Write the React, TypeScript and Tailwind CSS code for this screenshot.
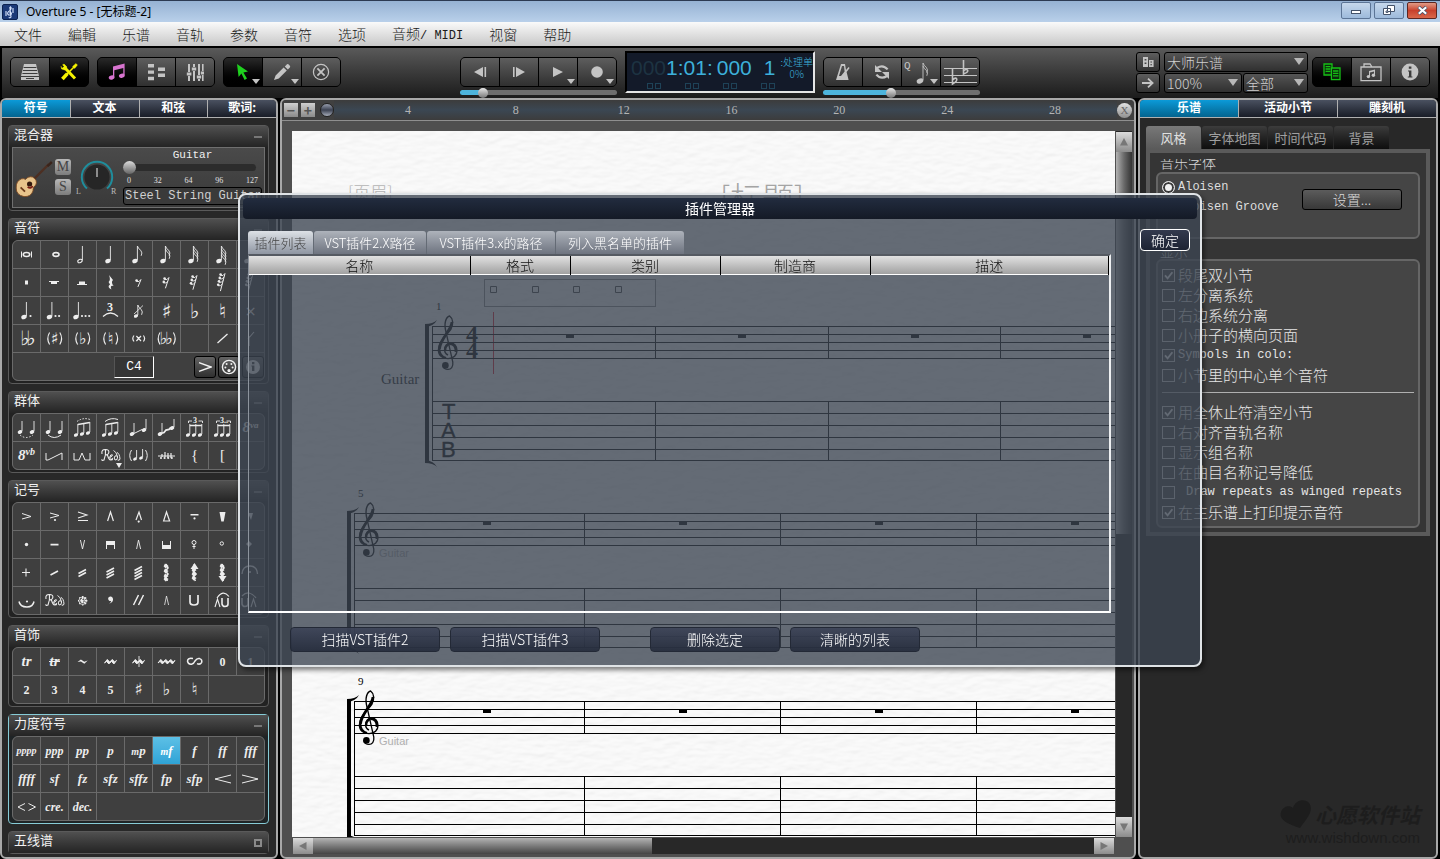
import React from "react";

const MONO = "[font-family:'Liberation_Mono',monospace]";
const SERIF = "[font-family:'Liberation_Serif',serif]";
const MUSIC = "[font-family:'DejaVu_Sans',sans-serif]";

/* ---------- small drawing helpers ---------- */

function Svg({ w = 27, h = 27, children }: { w?: number; h?: number; children: React.ReactNode }) {
  return (
    <svg width={w} height={h} viewBox={`0 0 ${w} ${h}`} fill="currentColor" stroke="none" aria-hidden="true">
      {children}
    </svg>
  );
}

function Line({ d, w = 1 }: { d: string; w?: number }) {
  return <path d={d} fill="none" stroke="currentColor" strokeWidth={w} />;
}

function Head({ x, y, hollow = false, r = 2.8 }: { x: number; y: number; hollow?: boolean; r?: number }) {
  return (
    <ellipse
      cx={x}
      cy={y}
      rx={hollow ? r - 0.5 : r}
      ry={hollow ? r * 0.55 : r * 0.75}
      transform={`rotate(-24 ${x} ${y})`}
      fill={hollow ? "none" : "currentColor"}
      stroke={hollow ? "currentColor" : "none"}
      strokeWidth={hollow ? 1.1 : 0}
    />
  );
}

function Note({ x, y = 20, h = 15, hollow = false, flags = 0, r = 2.8 }: { x: number; y?: number; h?: number; hollow?: boolean; flags?: number; r?: number }) {
  const sx = x + r - 0.4;
  return (
    <g>
      <Head x={x} y={y} hollow={hollow} r={r} />
      <Line d={`M${sx} ${y - 1} V${y - h}`} w={0.9} />
      {Array.from({ length: flags }, (_, i) => (
        <Line key={i} d={`M${sx} ${y - h + i * 3} q1 3 3.4 4.4 q2 2.4 .4 5.4`} w={0.9} />
      ))}
    </g>
  );
}

const dots = (n: number, x: number, y: number, step = 3.6) =>
  Array.from({ length: n }, (_, i) => <circle key={i} cx={x + i * step} cy={y} r="1.1" />);

function RestFlags({ n }: { n: number }) {
  const top = 13.5 - n * 2;
  return (
    <Svg>
      {Array.from({ length: n }, (_, i) => (
        <g key={i}>
          <circle cx={11.6 - i * 0.8} cy={top + i * 3.4} r="1.3" />
          <Line d={`M${11.4 - i * 0.8} ${top + i * 3.4 + 1} q3 1 ${4.4} -2`} w={0.9} />
        </g>
      ))}
      <Line d={`M16 ${top - 1} L${13.4 - n * 0.5} ${top + n * 3.4 + 3}`} w={1} />
    </Svg>
  );
}

const t = (s: string, cls: string) => <span className={cls}>{s}</span>;
const acc = (s: string) => t(s, `${MUSIC} text-[20px] leading-none`);
const accS = (s: string) => t(s, `${MUSIC} text-[14px] leading-none`);
const dyn = (s: string) => t(s, `${SERIF} text-[13px] leading-none font-bold italic`);
const dynS = (s: string) => t(s, `${SERIF} text-[10px] leading-none font-bold italic`);
const num = (s: string) => t(s, `${SERIF} text-[12px] leading-none font-bold`);

/* an accidental between tall, thin parentheses */
function Paren({ sign }: { sign: string }) {
  return (
    <Svg>
      <Line d="M8.6 7.5 Q5 13.5 8.6 19.5 M18.8 7.5 Q22.4 13.5 18.8 19.5" w={1.1} />
      <text x="13.7" y="19" fontSize="16" textAnchor="middle" fontFamily="DejaVu Sans">{sign}</text>
    </Svg>
  );
}

const Beam = ({ arc }: { arc: "dash" | "solid" | "3" | "3.." }) => (
  <Svg>
    {[7, 13, 19].map((x, i) => {
      const slope = arc === "dash" || arc === "solid" ? i : 0;
      return <Note key={x} x={x} y={21 - slope} h={11} r={2.2} />;
    })}
    {arc === "dash" || arc === "solid" ? (
      <>
        <Line d="M8.8 10.5 L20.8 8.5" w={1.4} />
        <path d="M8 7.5 Q14 3 21 5.5" fill="none" stroke="currentColor" strokeDasharray={arc === "dash" ? "1.5 1.5" : "none"} />
      </>
    ) : (
      <>
        <Line d="M8.8 11.5 H20.8" w={1.4} />
        <Line d="M7.5 9 V7 H11 M17.5 7 H21.5 V9" w={0.9} />
        <text x={arc === "3" ? 12 : 11} y="8.5" fontSize="8" fontWeight="bold" fontFamily="Liberation Serif">
          {arc}
        </text>
      </>
    )}
  </Svg>
);

const Tie = ({ dash }: { dash?: boolean }) => (
  <Svg>
    <Note x={7} y={18} h={11} r={2.4} />
    <Note x={19} y={18} h={11} r={2.4} />
    <path d="M7 21 Q13 26 20 21" fill="none" stroke="currentColor" strokeDasharray={dash ? "1.5 1.8" : "none"} />
  </Svg>
);

const Ped = ({ menu }: { menu?: boolean }) => (
  <Svg>
    <Line d="M5 12 Q4 7 9 7.5 Q13 8 11.5 11.5 Q10 13.5 8 12.5 M8.5 8 Q9 13 7 18 Q5 19 4.6 17.4 M10.4 13 Q12 18 13.5 18 Q15 18 15.6 16" w={1.1} />
    <Line d="M12.6 15.5 Q16 14 15.4 12.8 Q13.5 12 12.8 15 Q13 18.6 16 17.6 M20.6 15 Q20 13 18 14 Q16.4 16 18 18 Q20.6 18.4 20.6 15 Q19.5 10 16.6 8.4 M20.6 18 Q22.5 19 23 17 Q22.6 11.5 20 10.5" w={1} />
    {menu && <path d="M19 21 h6 l-3 5z" />}
  </Svg>
);

const Strokes = ({ n }: { n: number }) => (
  <Svg>
    {Array.from({ length: n }, (_, i) => (
      <Line key={i} d={`M9.5 ${16 + i * 3 - (n - 1) * 1.5} L17 ${12 + i * 3 - (n - 1) * 1.5}`} w={1.7} />
    ))}
  </Svg>
);

const Wave = ({ up, down }: { up?: boolean; down?: boolean }) => (
  <Svg>
    {(up ? [11, 15, 19] : down ? [7, 11, 15] : [7, 12, 17, 20]).map((y) => (
      <path key={y} d={`M12 ${y - 2.4} l3.6 2.4 l-3 2.6 l-2 -2.4z`} />
    ))}
    <Line d="M13 5 L15 9 L12.4 12 L15 15 L12.4 18 L14.4 22" w={1.6} />
    {up && <path d="M9.5 10 L13.5 4 L17.5 10z" />}
    {down && <path d="M9.5 17 L13.5 23 L17.5 17z" />}
  </Svg>
);

const Mordent = ({ n, cut }: { n: number; cut?: boolean }) => {
  const x0 = 13.5 - n * 2.5;
  return (
    <Svg>
      {Array.from({ length: n }, (_, i) => (
        <path key={i} d={`M${x0 + i * 5 - 1} 15 l2.8 -3.6 l2.4 2.6 l1.8 -1.6 l-2.6 3.6 l-2.4 -2.6z`} stroke="currentColor" strokeWidth="0.9" />
      ))}
      {cut && <Line d="M14 8 V19" w={0.9} />}
    </Svg>
  );
};

/* ---------- symbol palettes ---------- */

const notes: React.ReactNode[] = [
  <Svg><Line d="M8.5 10.5 V16.5 M18.5 10.5 V16.5" w={1} /><ellipse cx="13.5" cy="13.5" rx="3.2" ry="2" fill="none" stroke="currentColor" strokeWidth="1.6" /></Svg>,
  <Svg><ellipse cx="15" cy="13.5" rx="3" ry="1.9" fill="none" stroke="currentColor" strokeWidth="1.6" /></Svg>,
  <Svg><Note x={11} hollow /></Svg>,
  <Svg><Note x={11} /></Svg>,
  <Svg><Note x={10} flags={1} /></Svg>,
  <Svg><Note x={10} flags={2} /></Svg>,
  <Svg><Note x={10} flags={3} /></Svg>,
  <Svg><Note x={10} flags={4} /></Svg>,
  <Svg><Note x={10} flags={4} /></Svg>,
  <Svg><path d="M12 11.5 h3 v4 h-3z" /></Svg>,
  <Svg><path d="M8 12 h10 v1 h-2 v2 h-6 v-2 h-2z" /></Svg>,
  <Svg><path d="M8 15 h2 v-2.5 h6 v2.5 h2 v1 h-10z" /></Svg>,
  <Svg><path d="M12 6 L16 11 Q13.6 13 16.6 17 Q12.6 16 14.4 20.4 Q9.6 18 13 15.4 L11.6 13 Q14 11 12 6z" /></Svg>,
  <RestFlags n={1} />,
  <RestFlags n={2} />,
  <RestFlags n={3} />,
  <RestFlags n={4} />,
  <RestFlags n={4} />,
  <Svg><Note x={11} />{dots(1, 17.5, 19)}</Svg>,
  <Svg><Note x={8.5} />{dots(2, 14.5, 19)}</Svg>,
  <Svg><Note x={7} />{dots(3, 13, 19)}</Svg>,
  <Svg><text x="10" y="13.5" fontSize="12" fontWeight="bold" fontFamily="Liberation Serif">3</text><Line d="M6 19.5 Q13.5 12.5 21 19.5" w={1.2} /></Svg>,
  <Svg><Note x={11} y={19} h={11} r={2.2} flags={1} /><Line d="M9 17 L18 8.5" w={0.8} /></Svg>,
  acc("♯"),
  acc("♭"),
  acc("♮"),
  accS("×"),
  <Svg><text x="7" y="20" fontSize="20" fontFamily="DejaVu Sans">♭</text><text x="13" y="20" fontSize="20" fontFamily="DejaVu Sans">♭</text></Svg>,
  <Paren sign="♯" />,
  <Paren sign="♭" />,
  <Paren sign="♮" />,
  <Svg><Line d="M9 10.5 Q6.6 13.5 9 16.5 M18.4 10.5 Q20.8 13.5 18.4 16.5 M11.4 11 L16 16 M16 11 L11.4 16" w={1.2} /></Svg>,
  <Svg><Line d="M7 7.5 Q3.4 13.5 7 19.5 M20.4 7.5 Q24 13.5 20.4 19.5" w={1.1} /><text x="6.6" y="19" fontSize="17" fontFamily="DejaVu Sans">♭</text><text x="12" y="19" fontSize="17" fontFamily="DejaVu Sans">♭</text></Svg>,
  null,
  <Svg><Line d="M8.5 18 L18.5 9" w={1.3} /></Svg>,
  <Svg><Line d="M12 21 V11 M11 14 L17 7" w={1.1} /></Svg>,
];

const groups: React.ReactNode[] = [
  <Tie dash />,
  <Tie />,
  <Beam arc="dash" />,
  <Beam arc="solid" />,
  <Svg><Note x={7} y={20} h={11} r={2.4} /><Note x={19} y={16} h={11} r={2.4} /><Line d="M9 19.5 L17 15.5" /></Svg>,
  <Svg><Note x={7} y={20} h={11} r={2.4} /><Note x={19} y={14} h={9} r={2.4} /><Line d="M8 19.5 L11 18.5 L13 16 L16 15.5 L18 13.5" w={1.8} /></Svg>,
  <Beam arc="3" />,
  <Beam arc="3.." />,
  <span className={`${SERIF} text-[15px] leading-none font-bold italic`}>8<sup className="text-[9px]">va</sup></span>,
  <span className={`${SERIF} text-[15px] leading-none font-bold italic`}>8<sup className="text-[10px]">vb</sup></span>,
  <Svg><Line d="M5 11 V18 H7 L21 11 V18" /></Svg>,
  <Svg><Line d="M5 11 V18 H10 L13 11 L16 18 H21 V11" /></Svg>,
  <Ped menu />,
  <Svg><Note x={10} y={17} h={9} r={2} /><Note x={16} y={16} h={9} r={2} /><Line d="M6.5 8 Q3 13.5 6.5 19 M20.5 8 Q24 13.5 20.5 19" /></Svg>,
  <Svg><Line d="M5 14 H22 M9 12 V15 M12 10 V15 M15 11 V16 M18 11 V16" w={1.2} />{dots(4, 8, 16)}</Svg>,
  t("{", `${SERIF} text-[15px] leading-none`),
  t("[", `${SERIF} text-[15px] leading-none`),
  null,
];

const marks: React.ReactNode[] = [
  <Svg><Line d="M9 10.5 L18 13.5 L9 16" w={1} /></Svg>,
  <Svg><Line d="M9 10 L18 12.5 L9 15" w={1} />{dots(1, 14, 17)}</Svg>,
  <Svg><Line d="M9 9 L18 12 L9 15 M9 17.5 H19" w={1.1} /></Svg>,
  <Svg><Line d="M10.6 18 L13.5 9 L16.4 18" w={1.2} /></Svg>,
  <Svg><Line d="M11 17 L14 9 L16.5 17" w={1.2} />{dots(1, 13.7, 18.6)}</Svg>,
  <Svg><path d="M10.6 18 L13.5 9 L16.6 18z" fill="none" stroke="currentColor" strokeWidth="1.2" /></Svg>,
  <Svg><path d="M9.5 11 h8 v1.5 h-8z" />{dots(1, 13.5, 15.4)}</Svg>,
  <Svg><path d="M10.5 9 h6 l-1.8 9.5 h-2.4z" /></Svg>,
  <Svg><path d="M11 10 h5 l-2 7z" /></Svg>,
  <Svg><circle cx="13.5" cy="13.5" r="1.7" /></Svg>,
  <Svg><path d="M9.5 12.8 h8 v1.6 h-8z" /></Svg>,
  <Svg><Line d="M11.4 9 L13.5 18 L15.6 9" w={0.9} /></Svg>,
  <Svg><path d="M9 10 h9 v8 h-1 v-4 h-7 v4 h-1z" /></Svg>,
  <Svg><Line d="M11.6 18 L13.5 9 L15.6 18" w={0.9} /></Svg>,
  <Svg><path d="M9 10 h1 v4 h7 v-4 h1 v8 h-9z" /></Svg>,
  <Svg><circle cx="13" cy="11.5" r="2" fill="none" stroke="currentColor" /><Line d="M13 13.5 V18 M11.4 15.5 H14.6" /></Svg>,
  <Svg><circle cx="12.8" cy="12.5" r="1.7" fill="none" stroke="currentColor" /></Svg>,
  <Svg><path d="M12 10 l3 3 -3 3 -3 -3z" /></Svg>,
  <Svg><Line d="M9 13.5 H17 M13 9.5 V17.5" w={1.1} /></Svg>,
  <Strokes n={1} />,
  <Strokes n={2} />,
  <Strokes n={3} />,
  <Strokes n={4} />,
  <Wave />,
  <Wave up />,
  <Wave down />,
  <Svg><Line d="M5 15 Q5.5 7 13 7 Q20 7 20.5 15" w={1.3} />{dots(1, 13, 13)}</Svg>,
  <Svg><Line d="M6 14.5 Q7 20 14 20 Q20 20 21 14.5" w={1.5} />{dots(1, 14, 14.5)}</Svg>,
  <Ped />,
  <Svg>
    {[0, 45, 90, 135].map((a) => (
      <path key={a} d="M13.7 9 V18.4" stroke="currentColor" strokeWidth="1.4" strokeDasharray="3 1.2" transform={`rotate(${a} 13.7 13.7)`} />
    ))}
    <circle cx="13.7" cy="13.7" r="3.8" fill="none" stroke="currentColor" strokeWidth="0.8" />
  </Svg>,
  <Svg><path d="M14 9.5 a2.3 2.3 0 1 0 .2 4.4 q-.4 1.6 -2 2.8 q4.4 -1.6 3.8 -5 q-.4 -2 -2 -2.2z" /></Svg>,
  <Svg><Line d="M8.5 18 L13.5 8 M13.5 18 L18.5 8" w={1.5} /></Svg>,
  <Svg><Line d="M11.6 18 L13.5 9 L15.6 18" w={0.8} /></Svg>,
  <Svg><Line d="M9 8 V15 Q9 18 13 18 Q17 18 17 15 V8" w={1.7} /></Svg>,
  <Svg><Line d="M8 11 Q14 2 20 9.5" w={1.2} /><Line d="M6 20 L8.5 12 L11 20" w={1.1} /><Line d="M13 11 V17 Q13.5 19.5 16 19.5 Q19 19.5 19 17 V11" w={1.6} /></Svg>,
  <Svg><Line d="M5 9 Q12 2 19 11" w={1.2} /><Line d="M5 11 V17 Q5.5 19.5 8 19.5 Q11 19.5 11 17 V11" w={1.6} /><Line d="M14 20 L16.5 12 L19 20" w={1.1} /></Svg>,
];

const ornaments: React.ReactNode[] = [
  t("tr", `${SERIF} text-[15px] leading-none font-bold italic`),
  <span className={`${SERIF} relative text-[15px] leading-none font-bold italic`}>tr<span className="absolute inset-x-0 top-[7px] h-px bg-current" /></span>,
  <Svg><path d="M8.5 14 l3.4 -2.6 l3.4 2.4 l3.4 -1.2 l-3.4 3.2 l-3.4 -2.4z" /></Svg>,
  <Mordent n={2} />,
  <Mordent n={2} cut />,
  <Mordent n={3} />,
  <Svg><Line d="M12 10.6 Q6.5 9.5 6.5 13.2 Q7 16.6 10.5 16.2 Q13 15.5 14 13 Q16 10 18.6 10.6 Q21.6 11.5 20.6 14.6 Q19 17 16 15.6" w={1.5} /></Svg>,
  num("0"), num("1"), num("2"), num("3"), num("4"), num("5"),
  t("♯", `${MUSIC} text-[17px] leading-none`),
  t("♭", `${MUSIC} text-[17px] leading-none`),
  t("♮", `${MUSIC} text-[17px] leading-none`),
];

const dynamics: React.ReactNode[] = [
  dynS("pppp"),
  t("ppp", `${SERIF} text-[12px] leading-none font-bold italic`),
  dyn("pp"),
  dyn("p"),
  <span className={`${SERIF} text-[13px] leading-none font-bold italic`}><span className="text-[10px]">m</span>p</span>,
  <span className={`${SERIF} text-[13px] leading-none font-bold italic`}><span className="text-[10px]">m</span>f</span>,
  dyn("f"), dyn("ff"), dyn("fff"), dyn("ffff"), dyn("sf"), dyn("fz"), dyn("sfz"), dyn("sffz"), dyn("fp"), dyn("sfp"),
  <Svg><Line d="M22 10 L6 14 L22 18" /></Svg>,
  <Svg><Line d="M5 10 L21 14 L5 18" /></Svg>,
  <Svg><Line d="M12 10.5 L5 14 L12 17.5 M15.5 10.5 L22.5 14 L15.5 17.5" /></Svg>,
  t("cre.", `${SERIF} text-[12px] leading-none font-bold italic`),
  t("dec.", `${SERIF} text-[12px] leading-none font-bold italic`),
];

const FILL = ["", "", "col-span-2", "", "", "", "col-span-6"];

function Palette({ title, items, active = -1, on = false, children }: { title: string; items: React.ReactNode[]; active?: number; on?: boolean; children?: React.ReactNode }) {
  const rest = (9 - (items.length % 9)) % 9;
  return (
    <Section title={title} on={on}>
      <div className="grid grid-cols-9 gap-px overflow-hidden rounded-md border border-[#6a6a6a] bg-[#6a6a6a]">
        {items.map((it, i) => (
          <button
            key={i}
            aria-label={`${title} ${i + 1}`}
            className={
              i === active
                ? "flex h-[27px] items-center justify-center overflow-hidden bg-linear-to-b from-[#5cc0e6] to-[#2ea3d6] text-white"
                : "flex h-[27px] items-center justify-center overflow-hidden bg-[#3f3f3f] text-[#ededed]"
            }
          >
            {it}
          </button>
        ))}
        {rest > 0 && <span className={`bg-[#3f3f3f] ${FILL[rest]}`} />}
        {children}
      </div>
    </Section>
  );
}

function Section({ title, on = false, closed = false, children }: { title: string; on?: boolean; closed?: boolean; children?: React.ReactNode }) {
  return (
    <section
      className={
        on
          ? "rounded-sm border border-[#86cbd6] bg-[#1f2426] pb-[2px]"
          : closed
            ? "rounded-sm border border-[#5a5a5a] bg-[#222]"
            : "rounded-sm border border-[#5a5a5a] bg-[#222] pb-[2px]"
      }
    >
      <div className="flex h-[21px] items-center justify-between bg-linear-to-b from-[#505050] to-[#242424] pr-[6px] pl-[5px]">
        <h2 className="h-full text-[13px] leading-[16px] text-[#f2f2f2]">{title}</h2>
        {closed ? <span className="size-[8px] border-2 border-[#8a8a8a]" /> : <span className="h-[2px] w-[8px] bg-[#777]" />}
      </div>
      <div className="px-[3px]">{children}</div>
    </section>
  );
}

/* ---------- tool bar ---------- */

function Tool({ label, on = false, arrow = false, children }: { label: string; on?: boolean; arrow?: boolean; children: React.ReactNode }) {
  return (
    <button
      aria-label={label}
      className={
        on
          ? "relative flex h-[28px] w-[38px] items-center justify-center bg-linear-to-b from-[#2a2a2a] to-black text-[#c4c4c4]"
          : "relative flex h-[28px] w-[38px] items-center justify-center bg-linear-to-b from-[#5e5e5e] to-[#303030] text-[#c4c4c4]"
      }
    >
      {children}
      {arrow && <span className="absolute right-[2px] bottom-[2px] border-x-4 border-t-[5px] border-x-transparent border-t-[#c4c4c4]" />}
    </button>
  );
}

function ToolGroup({ children }: { children: React.ReactNode }) {
  return <div className="flex gap-px overflow-hidden rounded-[5px] border border-black bg-black">{children}</div>;
}

const SLIDER =
  "mt-[3px] h-[5px] w-full appearance-none rounded-full [&::-webkit-slider-thumb]:size-[10px] [&::-webkit-slider-thumb]:appearance-none [&::-webkit-slider-thumb]:rounded-full [&::-webkit-slider-thumb]:bg-linear-to-b [&::-webkit-slider-thumb]:from-[#e8e8e8] [&::-webkit-slider-thumb]:to-[#777]";

function DarkSelect({ label, value, cls }: { label: string; value: string; cls: string }) {
  return (
    <div className={`relative ${cls}`}>
      <select
        aria-label={label}
        defaultValue={value}
        className="block h-[20px] w-full appearance-none rounded-[3px] border border-black bg-linear-to-b from-[#555] to-[#303030] pl-[2px] text-[14px] leading-[16px] font-light text-[#d0d0d0]"
      >
        <option>{value}</option>
      </select>
      <span className="pointer-events-none absolute top-[6px] right-[4px] border-x-5 border-t-[7px] border-x-transparent border-t-[#b8b8b8]" />
    </div>
  );
}

function Toolbar() {
  return (
    <div className="grid h-[50px] shrink-0 grid-cols-[1fr_auto_1fr] items-start border-x-2 border-black bg-linear-to-b from-[#5a5a5a] to-[#1c1c1c] px-[8px]">
      <div className="flex gap-[8px] pt-[9px]">
        <ToolGroup>
          <Tool label="库">
            <Svg w={20} h={18}>
              <path d="M4 1 H16 L19 13 V17 H1 V13z" />
              <path d="M3.6 4.5 H16.4 M3 7.5 H17 M2.4 10.5 H17.6 M1 13.5 H19" stroke="#3c3c3c" strokeWidth="1.2" />
              <path d="M6 15.5 H14" stroke="#3c3c3c" />
            </Svg>
          </Tool>
          <Tool label="工具" on>
            <svg width="18" height="18" viewBox="0 0 18 18" stroke="#f6f300" fill="#f6f300">
              <path d="M4.5 4.5 L15 15.5" strokeWidth="3" />
              <path d="M1 3 L4 1 L7 4 L5 7 L1.6 6z" strokeWidth="0.5" />
              <path d="M0 0 L4 3.6 L2 5z" fill="#111" stroke="none" />
              <path d="M15 3 L7 11" strokeWidth="1.6" />
              <path d="M12.6 3.4 L16 .6 L17.4 2 L14.6 5.4z" strokeWidth="0.5" />
              <path d="M7.4 10.6 L2.4 16" strokeWidth="3.6" />
            </svg>
          </Tool>
        </ToolGroup>
        <ToolGroup>
          <Tool label="乐谱视图" on>
            <svg width="18" height="18" viewBox="0 0 18 18" fill="#d774cf">
              <path d="M5 3.5 L16.6 .6 V12.6 H15.3 V5 L6.3 7.2 V14.6 H5z" />
              <ellipse cx="3.6" cy="14.6" rx="2.9" ry="2.1" transform="rotate(-15 3.6 14.6)" />
              <ellipse cx="13.8" cy="12.8" rx="2.9" ry="2.1" transform="rotate(-15 13.8 12.8)" />
            </svg>
          </Tool>
          <Tool label="音轨视图">
            <Svg w={18} h={18}>
              <path d="M1 1 h6 v3.4 h-6z M1 7.4 h6 v3.4 h-6z M1 13.8 h6 v3.4 h-6z M11 4.6 h7 v3.4 h-7z M11 10.6 h7 v3.4 h-7z" />
            </Svg>
          </Tool>
          <Tool label="混音器">
            <Svg w={18} h={18}>
              <path d="M2 1 h2 v8 h-2z M2 13 h2 v5 h-2z M7 1 h2 v3 h-2z M7 8 h2 v10 h-2z M12 1 h2 v11 h-2z M12 16 h2 v2 h-2z M16 1 h1.6 v7 h-1.6z M16 12 h1.6 v6 h-1.6z M.8 9.5 h4.6 v3 h-4.6z M5.8 4.5 h4.4 v3 h-4.4z M10.8 12.5 h4.4 v3 h-4.4z M14.8 8.5 h3.2 v3 h-3.2z" />
            </Svg>
          </Tool>
        </ToolGroup>
        <ToolGroup>
          <Tool label="选择" on arrow>
            <svg width="16" height="18" viewBox="0 0 16 18" fill="#1fd01f">
              <path d="M2 1 L13 8.5 L8.4 9.4 L12 15.6 L9.6 17 L6.4 10.6 L3.6 14z" />
            </svg>
          </Tool>
          <Tool label="铅笔" arrow>
            <Svg w={18} h={18}>
              <path d="M1 17 L2.6 12.4 L10.6 4.4 L13.8 7.6 L5.8 15.6z M11.8 3.4 L14 1.2 Q15 .6 16 1.8 L17 3 Q17.6 4 16.8 4.6 L14.8 6.6z" />
            </Svg>
          </Tool>
          <Tool label="删除">
            <Svg w={18} h={18}>
              <circle cx="9" cy="9" r="7.6" fill="none" stroke="currentColor" strokeWidth="1.2" />
              <Line d="M5.4 5.4 L12.6 12.6 M12.6 5.4 L5.4 12.6" w={1.8} />
            </Svg>
          </Tool>
        </ToolGroup>
      </div>

      <div className="flex gap-[8px]">
        <div className="flex w-[157px] flex-col pt-[9px]">
          <ToolGroup>
            <Tool label="后退"><Svg w={14} h={12}><path d="M1 6 L10 1 V11z M11.5 1 h1.6 v10 h-1.6z" /></Svg></Tool>
            <Tool label="前进"><Svg w={14} h={12}><path d="M13 6 L4 1 V11z M1 1 h1.6 v10 h-1.6z" /></Svg></Tool>
            <Tool label="播放" arrow><Svg w={12} h={12}><path d="M1 1 L11 6 L1 11z" /></Svg></Tool>
            <Tool label="录音" arrow><Svg w={12} h={12}><circle cx="6" cy="6" r="5.8" /></Svg></Tool>
          </ToolGroup>
          <input type="range" aria-label="速度" defaultValue={12} className={`${SLIDER} bg-linear-to-r from-[#4db4dc] from-12% to-[#6e6e6e] to-12%`} />
        </div>

        <div className="mt-[3px] flex h-[42px] w-[190px] flex-col overflow-hidden border-2 border-t-black border-r-[#e6e6e6] border-b-[#e6e6e6] border-l-black bg-[#131a29] text-[#3db0da]">
          <div className="flex h-[30px] items-center pl-[4px] [font-family:'Liberation_Sans',sans-serif] text-[21px] leading-[30px]">
            <span className="text-[#1d3342]">000</span>
            <span>1:01:</span>
            <span className="pl-[4px]">000</span>
            <span className="pl-[12px]">1</span>
            <span className="ml-auto flex shrink-0 flex-col items-center [font-family:'Noto_Sans_CJK_SC',sans-serif] text-[10px] leading-[12px] font-light whitespace-nowrap">
              <span>:处理单</span>
              <span>0%</span>
            </span>
          </div>
          <div className="flex gap-[24px] pl-[20px]">
            {[0, 1, 2, 3].map((i) => (
              <span key={i} className="flex gap-[2px]">
                <span className="size-[6px] border border-[#1e4257]" />
                <span className="size-[6px] border border-[#1e4257]" />
              </span>
            ))}
          </div>
        </div>

        <div className="flex w-[157px] flex-col pt-[9px]">
          <ToolGroup>
            <Tool label="节拍器">
              <Svg w={16} h={18}>
                <path d="M6 1 H10 L11 7 L13.6 4 L14.6 5 L11.6 9 L13.6 17 H1z M7 3 L4 13 H6 L9.6 8.4 L9 3z" fillRule="evenodd" />
              </Svg>
            </Tool>
            <Tool label="循环">
              <Svg w={16} h={16}>
                <Line d="M3 4 Q9 0 13.6 5.4 M13 12 Q7 16 2.4 10.6" w={2.2} />
                <path d="M1 1 V8 H8z M15 15 V8 H8z" />
              </Svg>
            </Tool>
            <Tool label="量化" arrow>
              <Svg w={34} h={27}>
                <text x="0" y="10" fontSize="11" fontFamily="Liberation Mono">Q</text>
                <g transform="translate(4 3)"><Note x={12} y={19} h={18} flags={2} r={3.4} /></g>
              </Svg>
            </Tool>
            <Tool label="转调">
              <Svg w={34} h={27}>
                <Line d="M1 9.5 H34 M1 16.5 H34 M1 23.5 H34" w={1.2} />
                <Line d="M20.5 1 V15 Q26 13 24.5 11 Q23 9.6 20.5 12 M9.5 9 V25 Q15 22 13.5 19.5 Q12 18.4 9.5 21" w={1.6} />
              </Svg>
            </Tool>
          </ToolGroup>
          <input type="range" aria-label="音量" defaultValue={43} className={`${SLIDER} bg-linear-to-r from-[#4db4dc] from-43% to-[#6e6e6e] to-43%`} />
        </div>
      </div>

      <div className="flex justify-end gap-[4px] pt-[4px]">
        <div className="flex flex-col gap-px">
          <button aria-label="布局" className="flex h-[20px] w-[24px] items-center justify-center rounded-[3px] border border-black bg-linear-to-b from-[#5e5e5e] to-[#333] text-[#c4c4c4]">
            <Svg w={12} h={11}><path fillRule="evenodd" d="M1 0 h5 v10 h-5z M2.6 2 v1.4 h1.8 v-1.4z M2.6 5.6 v1.4 h1.8 v-1.4z M7 3 h4.6 v7 h-4.6z M8.4 4.6 v1 h1.6 v-1z M8.4 7.2 v1 h1.6 v-1z" /></Svg>
          </button>
          <button aria-label="下一页" className="flex h-[20px] w-[24px] items-center justify-center rounded-[3px] border border-black bg-linear-to-b from-[#5e5e5e] to-[#333] text-[#c4c4c4]">
            <Svg w={12} h={12}><Line d="M0 6 H10 M6 1.6 L10.6 6 L6 10.4" w={1.8} /></Svg>
          </button>
        </div>
        <div className="flex w-[144px] flex-col gap-px">
          <DarkSelect label="乐谱类型" value="大师乐谱" cls="w-full" />
          <div className="flex gap-px">
            <DarkSelect label="缩放" value="100%" cls="w-[78px]" />
            <DarkSelect label="范围" value="全部" cls="w-[65px]" />
          </div>
        </div>
        <div className="pt-[5px]">
          <ToolGroup>
            <Tool label="复制页" on>
              <svg width="18" height="18" viewBox="0 0 18 18" fill="#0b2a0b" stroke="#16c016" strokeWidth="1.3">
                <path d="M1 1 H9 V12 H1z M2.6 3.6 H7.4 M2.6 6 H7.4 M2.6 8.4 H7.4" />
                <path d="M8.4 5 H17 V16.6 H8.4z M10 8 H15.4 M10 10.4 H15.4 M10 12.8 H15.4" />
              </svg>
            </Tool>
            <Tool label="乐谱文件夹">
              <Svg w={22} h={20}>
                <path d="M1 5 H21 V18.6 H1z M4 5 V2 H10 L12 5" fill="none" stroke="currentColor" strokeWidth="1.3" />
                <path d="M9 9 L15 7.6 V13 H14 V9.4 L10 10.4 V14.6 H9z" />
                <circle cx="8.4" cy="14.6" r="1.7" />
                <circle cx="13.4" cy="13.2" r="1.7" />
              </Svg>
            </Tool>
            <Tool label="信息">
              <Svg w={18} h={18}>
                <circle cx="9" cy="9" r="8.4" />
                <path d="M7 7.4 h3.4 v6 h1 v1.2 h-4.6 v-1.2 h1.2 v-4.8 h-1z M7.8 3.4 h2.6 v2.4 h-2.6z" fill="#3c3c3c" />
              </Svg>
            </Tool>
          </ToolGroup>
        </div>
      </div>
    </div>
  );
}

/* ---------- side panels ---------- */

function PanelTabs({ tabs }: { tabs: string[] }) {
  return (
    <div className="flex h-[18px] shrink-0 border-b border-[#b0b0b0] text-[12px] leading-[13px] font-bold text-white">
      {tabs.map((s, i) => (
        <button
          key={s}
          className={
            i === 0
              ? "flex-1 bg-linear-to-b from-[#0c9ad8] to-[#04648f] pb-[4px]"
              : "flex-1 border-l border-[#b0b0b0] bg-linear-to-b from-[#4a5160] to-[#191d27] pb-[4px]"
          }
        >
          {s}
        </button>
      ))}
    </div>
  );
}

function Mixer() {
  return (
    <div className="flex h-[61px] border border-[#6f6f6f] bg-linear-to-b from-[#4a4a4a] to-[#393939]">
      <svg width="42" height="42" viewBox="0 0 42 42" className="mt-[12px] shrink-0" aria-hidden="true">
        <path d="M20 20 L36 4" stroke="#4d2f22" strokeWidth="2.4" />
        <path d="M33.5 5.5 L38 1 L39.6 3 L35.4 7z" fill="#3a241b" />
        <path d="M4.4 22 Q8.4 17 12.6 19.4 Q15 16 19.6 17 Q25 20 22.8 25 Q19.4 27.4 20 31 Q18 37 11 36.6 Q3 35 3.2 28 Q3 24.6 4.4 22z" fill="#e8c48c" stroke="#7c4a23" strokeWidth="0.9" />
        <circle cx="16.6" cy="24" r="2.6" fill="#33190e" />
        <path d="M14.6 27 Q18 29 19.6 26" stroke="#7a1d14" strokeWidth="1.8" fill="none" />
        <path d="M7.6 27.4 L12 31.6" stroke="#6b3b1c" strokeWidth="1.8" />
      </svg>
      <div className={`flex shrink-0 flex-col gap-[4px] pt-[11px] ${SERIF}`}>
        {["M", "S"].map((s) => (
          <button key={s} className="h-[16px] w-[16px] rounded-[3px] bg-linear-to-b from-[#b8b8b8] to-[#7d7d7d] text-[14px] leading-[16px] text-[#444]">
            {s}
          </button>
        ))}
      </div>
      <svg width="46" height="44" viewBox="0 0 46 44" className="mt-[10px] shrink-0" aria-hidden="true">
        <circle cx="26" cy="19" r="12.6" fill="#262626" />
        <path d="M16 30.5 A15.2 15.2 0 1 1 36 30.5" fill="none" stroke="#1f8d9c" strokeWidth="2" />
        <path d="M26 10 V19" stroke="#b9b9b9" strokeWidth="1.4" />
        <text x="5" y="36" fontSize="8" fill="#bbb" fontFamily="Liberation Serif">L</text>
        <text x="40" y="36" fontSize="8" fill="#bbb" fontFamily="Liberation Serif">R</text>
      </svg>
      <div className="flex min-w-0 flex-1 flex-col pr-[2px] pl-[6px]">
        <p className={`${MONO} h-[15px] text-center text-[11px] leading-[15px] text-[#f0f0f0]`}>Guitar</p>
        <input
          type="range"
          aria-label="音量"
          defaultValue={0}
          className="mt-[1px] mr-[6px] h-[7px] appearance-none rounded-full bg-[#2c2c2c] [&::-webkit-slider-thumb]:size-[13px] [&::-webkit-slider-thumb]:appearance-none [&::-webkit-slider-thumb]:rounded-full [&::-webkit-slider-thumb]:bg-linear-to-b [&::-webkit-slider-thumb]:from-[#dcdcdc] [&::-webkit-slider-thumb]:to-[#666]"
        />
        <div className={`${SERIF} flex justify-between px-[4px] pt-[5px] text-[8px] leading-[10px] text-[#e0e0e0]`}>
          <span>0</span>
          <span>32</span>
          <span>64</span>
          <span>96</span>
          <span>127</span>
        </div>
        <select aria-label="音色" className={`${MONO} mt-[1px] h-[18px] w-full appearance-none rounded-[3px] border border-black bg-[#3a3a3a] px-[1px] text-[12px] leading-[16px] text-[#d0d0d0]`}>
          <option>Steel String Guitar</option>
        </select>
      </div>
    </div>
  );
}

function SmallButton({ label, children }: { label: string; children: React.ReactNode }) {
  return (
    <button aria-label={label} className="flex size-[22px] items-center justify-center rounded-[3px] border border-black bg-linear-to-b from-[#646464] to-[#303030] text-[#f0f0f0]">
      {children}
    </button>
  );
}

function LeftPanel() {
  return (
    <aside className="flex w-[278px] shrink-0 flex-col overflow-hidden rounded-md border-2 border-[#a8a8a8] bg-[#282828]">
      <PanelTabs tabs={["符号", "文本", "和弦", "歌词:"]} />
      <div className="flex flex-col gap-[7px] pt-[7px] pr-[7px] pl-[6px]">
        <Section title="混合器">
          <Mixer />
        </Section>
        <Palette title="音符" items={notes}>
          <div className="col-span-9 flex h-[27px] items-center justify-end gap-[2px] bg-[#3f3f3f]">
            <input
              aria-label="音高"
              defaultValue="C4"
              className={`${MONO} mr-[38px] block h-[22px] w-[40px] border border-t-[#555] border-r-white border-b-white border-l-[#555] bg-[#353535] text-center text-[13px] text-white`}
            />
            <SmallButton label="重音">
              <Svg w={14} h={12}><Line d="M1 1.6 L13 6 L1 10.4" w={1.5} /></Svg>
            </SmallButton>
            <SmallButton label="MIDI 输入">
              <Svg w={16} h={16}><circle cx="8" cy="8" r="6.6" fill="none" stroke="currentColor" strokeWidth="1.4" /><circle cx="4.4" cy="8.4" r="1" /><circle cx="11.6" cy="8.4" r="1" /><circle cx="5.6" cy="5" r="1" /><circle cx="10.4" cy="5" r="1" /><circle cx="8" cy="11.6" r="1.6" /></Svg>
            </SmallButton>
            <SmallButton label="说明">
              <Svg w={16} h={16}><circle cx="8" cy="8" r="7" /><path d="M7 3 h2.4 v2.2 h-2.4z M6.4 6.6 h3 v5.4 h-2.4 v-4.4 h-.6z" fill="#444" /></Svg>
            </SmallButton>
          </div>
        </Palette>
        <Palette title="群体" items={groups} />
        <Palette title="记号" items={marks} />
        <Palette title="首饰" items={ornaments} />
        <Palette title="力度符号" items={dynamics} active={5} on />
        <Section title="五线谱" closed />
      </div>
    </aside>
  );
}

/* ---------- score ---------- */

function Clef({ x, y }: { x: number; y: number }) {
  return (
    <g transform={`translate(${x} ${y})`} fill="none" stroke="#000">
      <path d="M9 17 C6.6 8 9 2 12.6 1 C16 3.4 16.6 9 14 14 C10 20 1.4 26 1.4 35 C1.4 41 6 43.6 11 43.6 C16.6 43.6 20 40 20 35.6 C20 31 17 28 13.6 28 C10 28 7.6 31 7.6 34.4 C7.6 37.4 9 39 11 40" strokeWidth="1.4" />
      <path d="M15 7 C14.4 15 3 24 2.4 34" strokeWidth="2.8" />
      <path d="M2.4 34 C2.6 39 5 42 9 43" strokeWidth="2" />
      <path d="M12.6 28.8 C17 28.6 19.4 32 18.8 37" strokeWidth="2.6" />
      <path d="M12.6 29 C9.6 30 8.2 32 8.4 35" strokeWidth="2" />
      <path d="M9 17 L15.8 47 C16.4 52 14 54.4 11 54.4 C8.6 54.4 6 53 6 50.4" strokeWidth="1.3" />
      <circle cx="8.4" cy="50.4" r="3.3" fill="#000" stroke="none" />
    </g>
  );
}

function System({ y, x, bars, rests, label }: { y: number; x: number; bars: number[]; rests: number[]; label: string }) {
  return (
    <g stroke="#000" shapeRendering="crispEdges">
      {[0, 8, 16, 24, 32, 75, 87, 99, 111, 123, 134].map((d) => (
        <line key={d} x1={x} x2="100%" y1={y + d + 0.5} y2={y + d + 0.5} />
      ))}
      <line x1={x + 0.5} x2={x + 0.5} y1={y} y2={y + 135} />
      {bars.map((b) => (
        <path key={b} d={`M${b + 0.5} ${y} v33 M${b + 0.5} ${y + 75} v60`} />
      ))}
      {rests.map((r) => (
        <rect key={r} x={r - 4} y={y + 9} width="8" height="3" stroke="none" />
      ))}
      <rect x={x - 7} y={y - 2} width="4" height="139" stroke="none" />
      <path d={`M${x - 7} ${y - 2} q8 0 12 -4 q-3 6 -12 7z M${x - 7} ${y + 137} q8 0 12 4 q-3 -6 -12 -7z`} stroke="none" shapeRendering="auto" />
      <text x={x + 4} y={y - 16} stroke="none" fontSize="11" fontFamily="Liberation Serif">{label}</text>
    </g>
  );
}

function Score() {
  return (
    <svg className="block size-full" aria-label="乐谱页面" role="img">
      <defs>
        <filter id="grain" x="0" y="0" width="100%" height="100%">
          <feTurbulence type="fractalNoise" baseFrequency="0.07 0.16" numOctaves="2" seed="4" result="n" />
          <feDiffuseLighting in="n" lightingColor="#ffffff" surfaceScale="0.45" diffuseConstant="1.16">
            <feDistantLight azimuth="70" elevation="56" />
          </feDiffuseLighting>
        </filter>
      </defs>
      <rect width="100%" height="100%" fill="#f5f5f5" />
      <rect width="100%" height="100%" filter="url(#grain)" opacity="0.5" />
      <text x="56" y="68" fontSize="17" fill="#b4b4b4" fontFamily="Noto Sans CJK SC" fontWeight="300">[页眉]</text>
      <text x="52%" y="79" fontSize="32" fill="#a4a4a4" textAnchor="start" fontFamily="Noto Sans CJK SC" fontWeight="300">[标题]</text>

      <g fill="none" stroke="#888">
        <rect x="192.5" y="148.5" width="171" height="27" />
        <path d="M198.5 155.5 h6 v6 h-6z M240.5 155.5 h6 v6 h-6z M281.5 155.5 h6 v6 h-6z M323.5 155.5 h6 v6 h-6z" stroke="#444" />
        <path d="M201.5 181 V243" stroke="#e02030" />
      </g>
      <System y={195} x={140} bars={[363, 536, 708]} rests={[278, 450, 623, 795]} label="1" />
      <Clef x={145} y={184} />
      <text x="89" y="253" fontSize="15" fill="#222" fontFamily="Liberation Serif">Guitar</text>
      <g fontFamily="Liberation Serif" fontWeight="bold" fontSize="24">
        <text x="174" y="211">4</text>
        <text x="174" y="227">4</text>
      </g>
      <g fontFamily="Liberation Sans" fontSize="22" fill="#000" stroke="#000" strokeWidth="0.4">
        <text x="150" y="288">T</text>
        <text x="149" y="307">A</text>
        <text x="149" y="326">B</text>
      </g>

      <System y={382} x={62} bars={[292, 488, 684]} rests={[195, 391, 587, 783]} label="5" />
      <Clef x={66} y={371} />
      <text x="87" y="426" fontSize="11" fill="#b0b0b0" fontFamily="Liberation Sans">Guitar</text>

      <System y={570} x={62} bars={[292, 488, 684]} rests={[195, 391, 587, 783]} label="9" />
      <Clef x={66} y={559} />
      <text x="87" y="614" fontSize="11" fill="#b0b0b0" fontFamily="Liberation Sans">Guitar</text>
    </svg>
  );
}

function ScrollButton({ label, d, cls }: { label: string; d: string; cls: string }) {
  return (
    <button aria-label={label} className={`flex shrink-0 items-center justify-center bg-linear-to-b from-[#dcdcdc] to-[#8c8c8c] text-[#777] ${cls}`}>
      <Svg w={10} h={10}><path d={d} /></Svg>
    </button>
  );
}

function Center() {
  return (
    <main className="flex min-w-0 flex-1 flex-col overflow-hidden rounded-md border-2 border-[#a8a8a8] bg-[#4f4f4f]">
      <div className="flex h-[21px] shrink-0 items-center border-b border-[#8f8f8f] bg-[#404040] pl-[2px]">
        <button aria-label="缩小" className="size-[14px] bg-linear-to-b from-[#cfcfcf] to-[#8b8b8b] text-[14px] leading-[13px] font-bold text-[#555]">−</button>
        <button aria-label="放大" className="ml-[3px] size-[14px] bg-linear-to-b from-[#cfcfcf] to-[#8b8b8b] text-[14px] leading-[13px] font-bold text-[#555]">+</button>
        <button aria-label="位置" className="ml-[5px] size-[14px] shrink-0 rounded-full border border-[#222] bg-linear-to-b from-[#9aa0b0] via-[#3c4252] to-[#aab0bd]" />
        <ol className={`flex h-full flex-1 items-center bg-linear-to-b from-[#3c3c3c] via-[#3b4753] to-[#3c3c3c] pr-[8px] pl-[20px] ${SERIF}`}>
          {["4", "8", "12", "16", "20", "24", "28"].map((n) => (
            <li key={n} className="flex-1 text-center text-[12px] leading-[20px] text-[#b4b4b4]">{n}</li>
          ))}
        </ol>
        <button aria-label="关闭标尺" className={`mr-[2px] size-[15px] rounded-full bg-linear-to-b from-[#e2e2e2] to-[#8f8f8f] text-[11px] leading-[15px] text-[#666] ${SERIF}`}>X</button>
      </div>
      <div className="flex min-h-0 flex-1 pt-[10px] pr-[2px] pl-[10px]">
        <div className="min-w-0 flex-1 overflow-hidden">
          <Score />
        </div>
        <div className="ml-px flex w-[16px] flex-col bg-[#282828] pt-px">
          <ScrollButton label="向上滚动" d="M1 8.5 L5 1 L9 8.5z" cls="h-[20px]" />
          <div className="h-[382px] bg-linear-to-r from-[#b4b4b4] via-[#6a6a6a] to-[#333]" />
          <ScrollButton label="向下滚动" d="M1 1.5 L5 9 L9 1.5z" cls="mt-auto h-[20px]" />
        </div>
      </div>
      <div className="flex h-[20px] shrink-0 pt-px pr-[20px] pb-[3px] pl-[11px]">
        <div className="flex flex-1 bg-[#282828]">
          <ScrollButton label="向左滚动" d="M8.5 1 L1 5 L8.5 9z" cls="w-[20px]" />
          <div className="w-[339px] bg-linear-to-b from-[#b4b4b4] to-[#454545]" />
          <ScrollButton label="向右滚动" d="M1.5 1 L9 5 L1.5 9z" cls="ml-auto w-[20px]" />
        </div>
      </div>
    </main>
  );
}

const optionsA: [string, boolean][] = [
  ["段尾双小节", true],
  ["左分离系统", false],
  ["右边系统分离", false],
  ["小册子的横向页面", false],
  ["Symbols in colo:", true],
  ["小节里的中心单个音符", false],
];
const optionsB: [string, boolean][] = [
  ["用全休止符清空小节", true],
  ["右对齐音轨名称", false],
  ["显示组名称", false],
  ["在曲目名称记号降低", false],
  ["Draw repeats as winged repeats", false],
  ["在主乐谱上打印提示音符", true],
];

function Option({ text, checked }: { text: string; checked: boolean }) {
  return (
    <label className="flex h-[20px] items-center gap-[3px] pl-[4px] text-[#e6e6e6]">
      <span className="relative size-[13px] shrink-0">
        <input type="checkbox" defaultChecked={checked} className="block size-[13px] appearance-none border border-[#d0d0d0] bg-[#4a4a4a]" />
        {checked && (
          <svg className="pointer-events-none absolute inset-0" width="13" height="13" viewBox="0 0 13 13" fill="none" stroke="#f0f0f0" strokeWidth="1.8">
            <path d="M3 6.4 L5.6 9.4 L10.4 3.2" />
          </svg>
        )}
      </span>
      {/^[A-Z]/.test(text) ? (
        <span className={text.startsWith("Draw") ? `${MONO} pl-[8px] text-[12px] whitespace-nowrap` : `${MONO} text-[12px] whitespace-nowrap`}>{text}</span>
      ) : (
        <span className="text-[15px] leading-[18px] font-light whitespace-nowrap">{text}</span>
      )}
    </label>
  );
}

function RightPanel() {
  return (
    <aside className="mr-[2px] flex w-[300px] shrink-0 flex-col overflow-hidden rounded-md border-2 border-[#a8a8a8] bg-[#282828]">
      <PanelTabs tabs={["乐谱", "活动小节", "雕刻机"]} />
      <div className="flex flex-col pt-[8px] pr-[6px] pl-[6px]">
        <div className="flex gap-px text-[13px] leading-[23px] text-[#a0a0a0]">
          <button className="w-[55px] rounded-t-[3px] bg-linear-to-b from-[#787878] to-[#5a5a5a] text-[#e0e0e0]">风格</button>
          <button className="w-[65px] rounded-t-[3px] bg-linear-to-b from-[#3c3c3c] to-[#0e0e0e]">字体地图</button>
          <button className="w-[65px] rounded-t-[3px] bg-linear-to-b from-[#3c3c3c] to-[#0e0e0e]">时间代码</button>
          <button className="w-[55px] rounded-t-[3px] bg-linear-to-b from-[#3c3c3c] to-[#0e0e0e]">背景</button>
        </div>
        <div className="border-4 border-[#5a5a5a] bg-[#353535] px-[6px] pt-[6px] pb-[4px]">
          <h3 className="flex h-[11px] items-end overflow-hidden pl-[4px] text-[14px] leading-[15px] font-light text-[#d8d8d8]">音乐字体</h3>
          <div className="mt-[2px] flex h-[67px] justify-between rounded-md border-2 border-[#666] bg-[#454545] pr-[16px] pl-[4px]">
            <div className={`flex flex-col pt-[3px] text-[12px] text-[#dedede] ${MONO}`}>
              {["Aloisen", "Aloisen Groove"].map((s, i) => (
                <label key={s} className="flex h-[20px] items-center gap-[3px] whitespace-nowrap">
                  <input
                    type="radio"
                    name="music-font"
                    defaultChecked={i === 0}
                    className="size-[13px] appearance-none rounded-full border border-[#e6e6e6] bg-[#3a3a3a] checked:bg-[#f2f2f2] checked:shadow-[inset_0_0_0_2px_#3a3a3a]"
                  />
                  {s}
                </label>
              ))}
            </div>
            <button className="mt-[15px] h-[21px] w-[100px] rounded-[3px] border border-black bg-linear-to-b from-[#5c5c5c] to-[#383838] text-[14px] leading-[19px] font-light text-[#d8d8d8]">设置...</button>
          </div>
          <h3 className="h-[20px] pl-[4px] text-[14px] leading-[24px] font-light text-[#d8d8d8]">显示</h3>
          <div className="rounded-md border-2 border-[#666] bg-[#454545] pt-[4px] pb-[4px]">
            {optionsA.map(([s, c]) => <Option key={s} text={s} checked={c} />)}
            <hr className="mx-[4px] mt-[7px] mb-[9px] border-[#b0b0b0]" />
            {optionsB.map(([s, c]) => <Option key={s} text={s} checked={c} />)}
          </div>
        </div>
      </div>
      <div className="mt-auto mr-[16px] mb-[10px] flex flex-col items-end text-[#1d1d1d]">
        <p className="flex items-center gap-[2px] text-[21px] leading-[30px] font-bold italic">
          <svg width="33" height="30" viewBox="0 0 33 30" fill="currentColor" aria-hidden="true">
            <path d="M20 29 C12 26 -2 22 1 13 C3 7 10 6 13 9 C15 1 25 -1 29 4 C35 12 25 21 20 29z" />
          </svg>
          心愿软件站
        </p>
        <p className="[font-family:'Liberation_Sans',sans-serif] text-[15px] leading-[18px]">www.wishdown.com</p>
      </div>
    </aside>
  );
}

/* ---------- plug-in manager ---------- */

function ActionButton({ cls, children }: { cls: string; children: React.ReactNode }) {
  return (
    <button className={`h-[25px] rounded-[4px] border border-[#232936] bg-linear-to-b from-[#3c4357]/90 to-[#242b3b]/90 text-[14px] leading-[23px] font-light text-white ${cls}`}>
      {children}
    </button>
  );
}

function PluginDialog() {
  const cols = ["名称", "格式", "类别", "制造商", "描述"];
  return (
    <div className="pointer-events-none fixed inset-0 flex items-center justify-center">
      <div role="dialog" aria-label="插件管理器" className="pointer-events-auto flex h-[474px] w-[964px] flex-col rounded-lg border-2 border-[#dfe3e6] bg-[#3c4551]/79 p-[3px] shadow-[2px_3px_5px_rgba(0,0,0,0.5)]">
        <h1 className="h-[21px] shrink-0 rounded-[4px] bg-linear-to-b from-[#222c3f] to-[#141a26] text-center text-[14px] leading-[21px] text-white">插件管理器</h1>
        <div className="flex flex-1 justify-between pt-[12px] pr-[7px] pl-[5px]">
          <div className="flex w-[863px] flex-col">
            <div className="flex gap-px text-[13px] leading-[23px] font-light">
              <button className="h-[23px] w-[65px] rounded-t-[3px] bg-linear-to-b from-[#dde1e6] to-[#8f96a2] text-[#444]">插件列表</button>
              <button className="h-[23px] w-[112px] rounded-t-[3px] bg-linear-to-b from-[#aeb3bb] to-[#6e7480] text-white">VST插件2.X路径</button>
              <button className="h-[23px] w-[128px] rounded-t-[3px] bg-linear-to-b from-[#aeb3bb] to-[#6e7480] text-white">VST插件3.x的路径</button>
              <button className="h-[23px] w-[128px] rounded-t-[3px] bg-linear-to-b from-[#aeb3bb] to-[#6e7480] text-white">列入黑名单的插件</button>
            </div>
            <div className="h-[359px] border-t-2 border-r-2 border-b-2 border-l border-t-[#555a62] border-r-[#eef0f2] border-b-white border-l-[#8d949d]">
              <table className="w-full table-fixed border-collapse border-b border-white">
                <colgroup>
                  <col className="w-[221px]" />
                  <col className="w-[100px]" />
                  <col className="w-[150px]" />
                  <col className="w-[150px]" />
                  <col />
                </colgroup>
                <thead>
                  <tr className="h-[19px] bg-linear-to-b from-[#e2e2e2] to-[#9e9e9e]">
                    {cols.map((c) => (
                      <th key={c} scope="col" className="border-r border-black p-0 text-center text-[14px] leading-[18px] font-light text-[#111]">{c}</th>
                    ))}
                  </tr>
                </thead>
                <tbody />
              </table>
            </div>
            <div className="flex gap-[10px] pt-[14px] pl-[42px]">
              <ActionButton cls="w-[150px]">扫描VST插件2</ActionButton>
              <ActionButton cls="w-[150px]">扫描VST插件3</ActionButton>
              <ActionButton cls="ml-[40px] w-[130px]">删除选定</ActionButton>
              <ActionButton cls="w-[130px]">清晰的列表</ActionButton>
            </div>
          </div>
          <button className="-mt-[2px] h-[22px] w-[50px] rounded-[4px] border border-white bg-linear-to-b from-[#333a4e] to-[#1d2333] text-[14px] leading-[20px] font-light text-white">确定</button>
        </div>
      </div>
    </div>
  );
}

export default function App() {
  return (
    <div className="flex h-screen min-h-[859px] flex-col overflow-hidden bg-black [font-family:'Noto_Sans_CJK_SC',sans-serif]">
      <header className="flex h-[22px] shrink-0 items-center border-t border-[#2c3a52] bg-linear-to-b from-[#96b2d3] to-[#b9d0ea] pr-[3px] pl-[2px]">
        <svg width="16" height="16" viewBox="0 0 16 16" aria-hidden="true">
          <rect x="0.5" y="0.5" width="15" height="15" rx="1.5" fill="#1b3a78" stroke="#0d2350" />
          <path d="M8 2.4 Q10.4 3.6 8 6.4 Q4 9 6.6 11 Q9.8 11.4 9.4 9 Q8 7.8 7.4 9.4 M7.8 3 L9 13 Q8 14.4 6.8 13.4 M11 4 V9 M4 7 V12" fill="none" stroke="#dbe8ff" strokeWidth="1.1" />
        </svg>
        <h1 className="pl-[8px] [font-family:'Noto_Sans','Noto_Sans_CJK_SC',sans-serif] text-[12px] leading-[20px] text-black">Overture 5 - [无标题-2]</h1>
        <div className="ml-auto flex gap-[3px] self-start pt-px">
          <button aria-label="最小化" className="flex h-[17px] w-[30px] items-center justify-center rounded-[2px] border border-[#5c7596] bg-linear-to-b from-[#c6d8ec] to-[#9dbadb]">
            <span className="mt-[3px] h-[4px] w-[10px] border border-[#44536a] bg-white" />
          </button>
          <button aria-label="还原" className="flex h-[17px] w-[30px] items-center justify-center rounded-[2px] border border-[#5c7596] bg-linear-to-b from-[#c6d8ec] to-[#9dbadb]">
            <svg width="12" height="11" viewBox="0 0 12 11" fill="#fff" stroke="#44536a">
              <path d="M4.5 .5 h7 v6 h-7z M.5 3.5 h7 v6 h-7z" />
              <path d="M3 6 h2 v1.4 h-2z" />
            </svg>
          </button>
          <button aria-label="关闭" className="flex h-[17px] w-[30px] items-center justify-center rounded-[2px] border border-[#5e2620] bg-linear-to-b from-[#e09a86] via-[#c8402c] to-[#d9674a]">
            <svg width="11" height="9" viewBox="0 0 11 9" fill="none">
              <path d="M1.6 1 L9.4 8 M9.4 1 L1.6 8" stroke="#44536a" strokeWidth="3.6" />
              <path d="M1.8 1.2 L9.2 7.8 M9.2 1.2 L1.8 7.8" stroke="#fff" strokeWidth="2.2" />
            </svg>
          </button>
        </div>
      </header>
      <nav className="flex h-[26px] shrink-0 items-center gap-[26px] border-b-2 border-black bg-linear-to-b from-[#fafafa] to-[#c8c8c8] pl-[14px] text-[14px] leading-[22px] font-light whitespace-nowrap text-[#1a1a1a]">
        {["文件", "編輯", "乐谱", "音轨", "参数", "音符", "选项"].map((s) => (
          <a key={s} href="#">{s}</a>
        ))}
        <a href="#">
          音频<span className={`${MONO} text-[12px]`}>/ MIDI</span>
        </a>
        <a href="#">视窗</a>
        <a href="#">帮助</a>
      </nav>
      <Toolbar />
      <div className="flex min-h-0 flex-1 gap-[2px]">
        <LeftPanel />
        <Center />
        <RightPanel />
      </div>
      <PluginDialog />
    </div>
  );
}
